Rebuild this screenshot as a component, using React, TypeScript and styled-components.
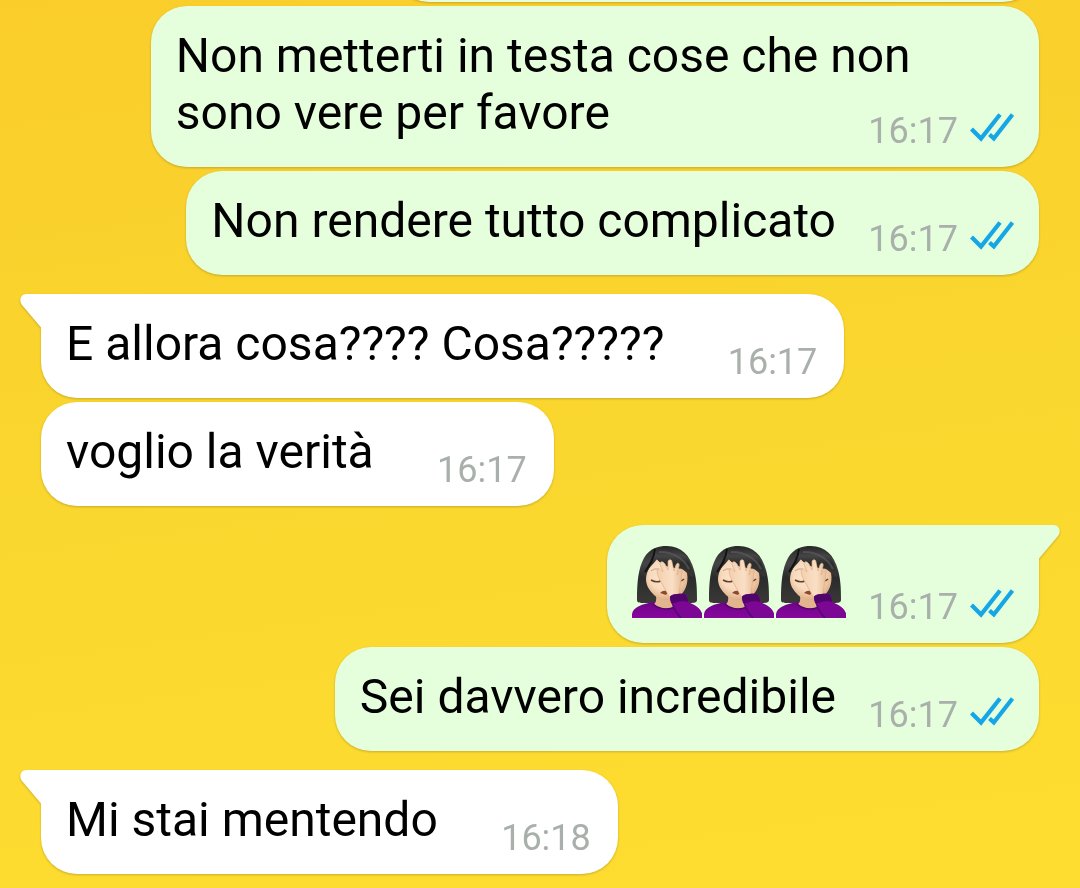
import React from "react";
import styled, { createGlobalStyle, css } from "styled-components";

const GlobalStyle = createGlobalStyle`
  * { box-sizing: border-box; }
  html { min-height: 100%; background: linear-gradient(172deg, #facd2b 0%, #fad72e 50%, #fedd30 100%); }
  body { margin: 0; font-family: Roboto, "Liberation Sans", sans-serif; }
`;

const Thread = styled.main`
  display: flex;
  flex-direction: column;
  gap: 4px;
  padding: 0 41px 14px;
  overflow: hidden;
`;

const Bubble = styled.article<{ $mine: boolean; $first?: boolean }>`
  position: relative;
  display: grid;
  max-width: 89%;
  align-self: ${(p) => (p.$mine ? "flex-end" : "flex-start")};
  margin-top: ${(p) => (p.$first ? "15px" : "0")};
  padding: 20px ${(p) => (p.$mine ? "25px" : "27px")} 15px 25px;
  border-radius: 36px;
  color: ${(p) => (p.$mine ? "#e5ffdc" : "#ffffff")};
  background: currentColor;
  filter: drop-shadow(0 1px 1px rgba(110, 90, 20, 0.35));
  ${(p) =>
    p.$first &&
    (p.$mine
      ? css`
          border-top-right-radius: 0;
        `
      : css`
          border-top-left-radius: 0;
        `)}
`;

const EarlierBubble = styled(Bubble)`
  width: 646px;
  height: 104px;
  margin-top: -102px;
`;

const TailShape = styled.svg<{ $mine: boolean }>`
  position: absolute;
  top: 0;
  width: 22px;
  height: 34px;
  ${(p) =>
    p.$mine
      ? css`
          right: -21px;
        `
      : css`
          left: -21px;
          transform: scaleX(-1);
        `}
`;

const Text = styled.p`
  grid-area: 1 / 1;
  margin: 1px 0 11px;
  font-size: 48px;
  line-height: 57px;
  color: #000;
`;

const Emojis = styled.div`
  grid-area: 1 / 1;
  display: flex;
  gap: 2px;
  margin-bottom: 10px;
`;

const Spacer = styled.span<{ $mine: boolean }>`
  display: inline-block;
  width: ${(p) => (p.$mine ? "178px" : "153px")};
`;

const EmojiSpacer = styled.span`
  flex: none;
  width: 166px;
`;

const Meta = styled.div`
  grid-area: 1 / 1;
  align-self: end;
  justify-self: end;
  display: flex;
  align-items: center;
  gap: 11px;
  font-size: 36px;
  line-height: 42px;
  color: #a9b0ab;
`;

const Ticks = styled.svg`
  width: 45px;
  height: 34px;
  margin-bottom: 4px;
`;

const Face = styled.svg`
  flex: none;
  width: 70px;
  height: 73px;
`;

function Tail({ mine }: { mine: boolean }) {
  return (
    <TailShape $mine={mine} viewBox="0 0 22 34" aria-hidden="true">
      <path d="M0 0H16C21 0 23.500 6 20 11L1 33.500H0Z" fill="currentColor" />
    </TailShape>
  );
}

function ReadTicks() {
  return (
    <Ticks viewBox="0 0 45 34" role="img" aria-label="Letto">
      <g fill="none" stroke="#14a6e6" strokeWidth="4.2">
        <path d="M2.500 17L12 26.500L31 2.500" />
        <path d="M20.500 22.500L24.800 26.500L43.500 2.500" />
      </g>
    </Ticks>
  );
}

function EmojiDefs() {
  return (
    <svg width="0" height="0" style={{ position: "absolute" }} aria-hidden="true">
      <defs>
        <linearGradient id="hair" x1="0" y1="0" x2="0" y2="1">
          <stop offset="0" stopColor="#292929" />
          <stop offset="0.3" stopColor="#454545" />
          <stop offset="0.55" stopColor="#2b2b2b" />
          <stop offset="1" stopColor="#3a3938" />
        </linearGradient>
        <radialGradient id="skin" cx="0.45" cy="0.4" r="0.6">
          <stop offset="0" stopColor="#fce7d0" />
          <stop offset="0.6" stopColor="#f8dabd" />
          <stop offset="1" stopColor="#dfae86" />
        </radialGradient>
        <linearGradient id="hand" x1="0" y1="0" x2="1" y2="0">
          <stop offset="0" stopColor="#f3d0b0" />
          <stop offset="0.6" stopColor="#fadfc5" />
          <stop offset="1" stopColor="#e8bd98" />
        </linearGradient>
        <linearGradient id="shirt" x1="0" y1="0" x2="0" y2="1">
          <stop offset="0" stopColor="#6c0586" />
          <stop offset="1" stopColor="#88069f" />
        </linearGradient>
      </defs>
    </svg>
  );
}

function Facepalm() {
  return (
    <Face viewBox="0 0 70 73" role="img" aria-label="Donna che si copre il volto">
      <path d="M5 55C5 38 6 24 12 13C18 3 26 1 35 1C49 1 58 10 62 25C65 36 65 46 65 55C65 58 61 58 57 58H13C8 58 5 58 5 55Z" fill="url(#hair)" />
      <path d="M0 73V69C1 62 10 59 22 57H47C59 59 68 62 70 69V73Z" fill="url(#shirt)" />
      <path d="M24 50H43V61C39 65 27 65 22 59Q25 57 24 50Z" fill="#e3b58f" />
      <path d="M21 59Q31 67 43 62" fill="none" stroke="#54056a" strokeWidth="1.5" />
      <path d="M14 34C14 26 20 18 24 14C30 20 50 18 55 28C57 38 53 48 46 52C38 57 28 56 22 50C17 45 14 40 14 34Z" fill="url(#skin)" />
      <path d="M12 29C17 22 20 14 22 5C27 2 31 2 35 2C49 2 60 14 61 32C58 30 56 28 50 24C42 23 30 22 25 14C21 20 16 22 13 32Z" fill="url(#hair)" />
      <path d="M23 4C22 13 18 19 13 27" fill="none" stroke="#111" strokeWidth="1.800" />
      <path d="M27 7C38 6 51 12 57 24" fill="none" stroke="#666" strokeWidth="2" opacity="0.5" />
      <path d="M19 26Q22 23 27 24" fill="none" stroke="#b18b6a" strokeWidth="1" opacity="0.7" />
      <path d="M19 35Q24 38 29 36" fill="none" stroke="#5e402c" strokeWidth="1.500" />
      <path d="M46 36Q49 37 52 34" fill="none" stroke="#5e402c" strokeWidth="1.400" />
      <path d="M28 48Q32 44 36 47L34 50Z" fill="#8d472b" />
      <path d="M38 53L33 44L29 37C26 32 24 26 26 24C28 23 30 26 31 27L28 19C28 16 31 16 33 19L36 25L36 17C36 14 40 14 40 17L42 26L44 20C45 17 48 18 47 21L45 30L47 25C49 23 51 25 50 28L49 36C48 43 46 46 48 51Z" fill="url(#hand)" stroke="#dcae86" strokeWidth="0.700" />
      <path d="M38 52C38 49 49 48 53 49C56 51 56 54 56 57C64 60 69 64 70 69V73H48C41 66 40 60 38 52Z" fill="#7c0795" />
      <path d="M38 52C38 49 49 48 53 49C55 51 56 54 56 57C50 55 44 57 40 59C38 57 38 54 38 52Z" fill="#51056b" />
      <path d="M41 60C43 67 46 70 49 73" fill="none" stroke="#52066a" strokeWidth="1.200" />
    </Face>
  );
}

type Message = { mine: boolean; first?: boolean; text?: string; emojis?: number; time: string };

const messages: Message[] = [
  { mine: true, text: "Non metterti in testa cose che non sono vere per favore", time: "16:17" },
  { mine: true, text: "Non rendere tutto complicato", time: "16:17" },
  { mine: false, first: true, text: "E allora cosa???? Cosa?????", time: "16:17" },
  { mine: false, text: "voglio la verità", time: "16:17" },
  { mine: true, first: true, emojis: 3, time: "16:17" },
  { mine: true, text: "Sei davvero incredibile", time: "16:17" },
  { mine: false, first: true, text: "Mi stai mentendo", time: "16:18" },
];

function MessageBubble({ mine, first, text, emojis, time }: Message) {
  return (
    <Bubble $mine={mine} $first={first}>
      {first && <Tail mine={mine} />}
      {text && (
        <Text>
          {text}
          <Spacer $mine={mine} />
        </Text>
      )}
      {emojis && (
        <Emojis>
          {Array.from({ length: emojis }, (_, i) => (
            <Facepalm key={i} />
          ))}
          <EmojiSpacer />
        </Emojis>
      )}
      <Meta>
        <time>{time}</time>
        {mine && <ReadTicks />}
      </Meta>
    </Bubble>
  );
}

export default function App() {
  return (
    <>
      <GlobalStyle />
      <EmojiDefs />
      <Thread>
        <EarlierBubble $mine aria-hidden="true" />
        {messages.map((m, i) => (
          <MessageBubble key={i} {...m} />
        ))}
      </Thread>
    </>
  );
}
